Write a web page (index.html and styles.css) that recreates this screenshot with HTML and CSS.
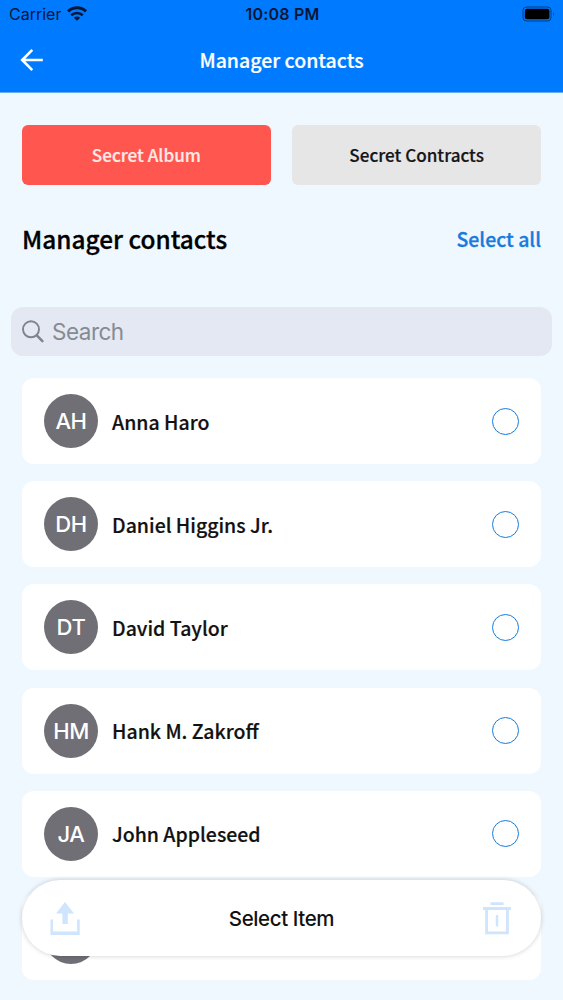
FILE: index.html
```html
<!DOCTYPE html>
<html lang="en">
<head>
  <meta charset="UTF-8">
  <meta name="viewport" content="width=device-width, initial-scale=1.0">
  <title>Manager contacts</title>
  <link rel="stylesheet" href="styles.css">
</head>
<body>
  <header class="header">
    <div class="status-bar">
      <div class="carrier">
        <span>Carrier</span>
        <svg width="20" height="15" viewBox="0 0 20 15" fill="none" stroke="currentColor" stroke-width="3.1">
          <path d="M1 5.4a13 13 0 0 1 18 0"/>
          <path d="M4.2 9.3a8.4 8.4 0 0 1 11.6 0" stroke-width="2.7"/>
          <path d="M10 14.8l-3.2-3.1a4.6 4.6 0 0 1 6.4 0z" fill="currentColor" stroke="none"/>
        </svg>
      </div>
      <span class="time">10:08 PM</span>
      <svg class="battery" width="34" height="16" viewBox="0 0 34 16">
        <rect x="1" y="1" width="28" height="14" rx="3.5" fill="none" stroke="#000" stroke-opacity=".5"/>
        <rect x="2.8" y="2.8" width="24.6" height="10.4" rx="2" fill="#000"/>
        <path d="M31 5.8q1.6 2.2 0 4.4z" fill="#000" fill-opacity=".5"/>
      </svg>
    </div>
    <div class="nav-bar">
      <button type="button" class="back" aria-label="Back">
        <svg width="24" height="24" viewBox="0 0 24 24" fill="none" stroke="currentColor" stroke-width="2.6">
          <path d="M22.8 12H2.5M12.3 1.8L2.2 12l10.1 10.2"/>
        </svg>
      </button>
      <h1>Manager contacts</h1>
    </div>
  </header>

  <main class="content">
    <div class="tabs">
      <button type="button" class="tab active">Secret Album</button>
      <button type="button" class="tab">Secret Contracts</button>
    </div>

    <div class="title-row">
      <h2>Manager contacts</h2>
      <a href="#" class="select-all">Select all</a>
    </div>

    <div class="search">
      <svg width="22" height="23" viewBox="0 0 22 23" fill="none" stroke="#80838c" stroke-width="1.9">
        <circle cx="9" cy="9.3" r="8"/>
        <path d="M14.8 15.3l5.6 5.8" stroke-width="2.5" stroke-linecap="round"/>
      </svg>
      <span>Search</span>
    </div>

    <ul class="contacts">
      <li class="contact">
        <span class="avatar">AH</span>
        <span class="name">Anna Haro</span>
        <span class="check"></span>
      </li>
      <li class="contact">
        <span class="avatar">DH</span>
        <span class="name">Daniel Higgins Jr.</span>
        <span class="check"></span>
      </li>
      <li class="contact">
        <span class="avatar">DT</span>
        <span class="name">David Taylor</span>
        <span class="check"></span>
      </li>
      <li class="contact">
        <span class="avatar">HM</span>
        <span class="name">Hank M. Zakroff</span>
        <span class="check"></span>
      </li>
      <li class="contact">
        <span class="avatar">JA</span>
        <span class="name">John Appleseed</span>
        <span class="check"></span>
      </li>
      <li class="contact">
        <span class="avatar"></span>
        <span class="name"></span>
        <span class="check"></span>
      </li>
    </ul>
  </main>

  <div class="toolbar">
    <svg width="30" height="33" viewBox="0 0 30 33" fill="#cfe4fd">
      <path d="M15 0l9 11.5h-6.2V22h-5.4V11.5H6z"/>
      <path d="M.5 17.5h2.6v12h24v-12h2.6V33H.5z"/>
    </svg>
    <span>Select Item</span>
    <svg width="28" height="33" viewBox="0 0 28 33" fill="none" stroke="#cfe4fd" stroke-width="2.8">
      <path d="M7.5 1.6h13M0 6.5h28M3.6 6.5v24.4h20.8V6.5"/>
      <path d="M14 13v11.5" stroke-width="2.5"/>
    </svg>
  </div>
</body>
</html>
```
FILE: styles.css
```css
* {
  margin: 0;
  padding: 0;
  box-sizing: border-box;
}

body {
  font-family: "Noto Sans CJK JP", sans-serif;
  font-weight: 500;
  background-color: #f0f8ff;
  color: #111;
  height: 1000px;
  overflow: hidden;
}

button {
  font: inherit;
  border: none;
  background: none;
}

.header {
  height: 93px;
  background-color: #007bff;
  border-bottom: 1px solid #62aef5;
}

.status-bar {
  display: grid;
  grid-template-columns: 1fr auto 1fr;
  align-items: center;
  height: 28px;
  padding: 0 7px 0 9px;
  font-family: Inter, sans-serif;
  font-size: 16px;
  color: #061637;
}

.carrier {
  display: flex;
  align-items: center;
  gap: 6px;
  font-weight: 400;
}

.carrier svg {
  margin-top: -2px;
}

.time {
  font-weight: 600;
  letter-spacing: 0.2px;
}

.battery {
  justify-self: end;
}

.nav-bar {
  display: grid;
  grid-template-columns: 1fr auto 1fr;
  align-items: center;
  height: 64px;
  padding: 0 20px;
  color: #fff;
}

.back {
  display: flex;
  color: inherit;
}

.nav-bar h1 {
  margin-top: -2px;
  font-size: 19.5px;
  font-weight: 500;
  -webkit-text-stroke: 0.2px;
}

.content {
  padding: 32px 22px 0;
}

.tabs {
  display: grid;
  grid-template-columns: 1fr 1fr;
  gap: 21.5px;
}

.tab {
  height: 60px;
  padding-bottom: 2px;
  border-radius: 6px;
  background-color: #e6e6e7;
  color: #151518;
  font-size: 17.1px;
  -webkit-text-stroke: 0.2px;
}

.tab.active {
  background-color: #ff574f;
  color: #ffe9e7;
}

.title-row {
  display: flex;
  justify-content: space-between;
  align-items: center;
  height: 110px;
  padding-bottom: 4px;
}

.title-row h2 {
  font-size: 24.4px;
  font-weight: 500;
  color: #000;
  -webkit-text-stroke: 0.3px;
}

.select-all {
  color: #187bdc;
  font-size: 19.5px;
  text-decoration: none;
  -webkit-text-stroke: 0.3px;
}

.search {
  display: flex;
  align-items: center;
  gap: 8px;
  height: 49px;
  margin: 12px -11px 22px;
  padding: 0 11px;
  border-radius: 12px;
  background-color: #e3e8f2;
  color: #868a94;
  font-family: Inter, sans-serif;
  font-weight: 400;
  font-size: 22.5px;
  letter-spacing: -0.5px;
}

.contacts {
  display: flex;
  flex-direction: column;
  gap: 17.2px;
  list-style: none;
}

.contact {
  display: flex;
  align-items: center;
  height: 86px;
  padding: 0 22px;
  border-radius: 12px;
  background-color: #fff;
}

.avatar {
  display: flex;
  align-items: center;
  justify-content: center;
  width: 54px;
  height: 54px;
  border-radius: 50%;
  background-color: #706f76;
  color: #fff;
  font-family: Inter, sans-serif;
  font-size: 22px;
  letter-spacing: -0.4px;
}

.name {
  flex: 1;
  margin-left: 14px;
  font-size: 19.5px;
  -webkit-text-stroke: 0.2px;
}

.check {
  width: 27px;
  height: 27px;
  border: 1.5px solid #187bdc;
  border-radius: 50%;
}

/* floats over the contact list */
.toolbar {
  position: absolute;
  top: 880px;
  left: 22px;
  right: 22px;
  display: flex;
  align-items: center;
  justify-content: space-between;
  height: 76px;
  padding: 0 30px 0 28px;
  border-radius: 38px;
  background-color: #fff;
  box-shadow: 0 0 5px rgba(0, 0, 0, 0.2);
  font-family: Inter, sans-serif;
  font-weight: 500;
  font-size: 20.5px;
  letter-spacing: -0.4px;
}
```
